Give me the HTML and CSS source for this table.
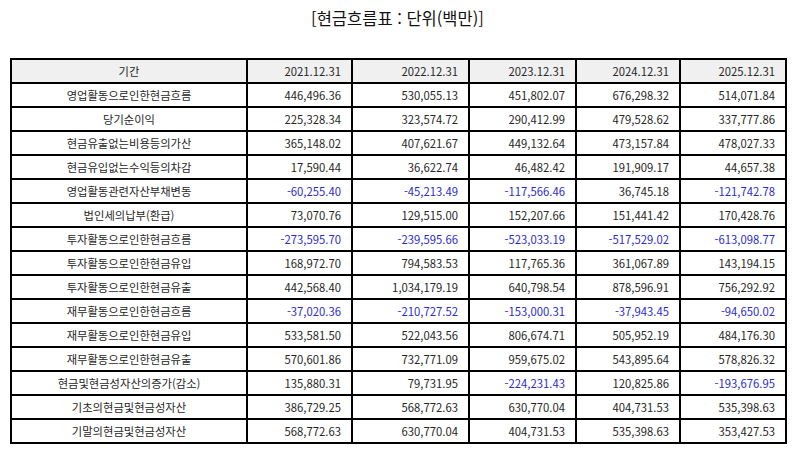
FILE: index.html
```html
<!DOCTYPE html>
<html lang="ko">
<head>
<meta charset="utf-8">
<link rel="stylesheet" href="styles.css">
</head>
<body>
<div class="page">
  <div class="title">[현금흐름표 : 단위(백만)]</div>
  <table class="cf">
    <colgroup>
      <col class="c-label"><col class="c1"><col class="c2"><col class="c3"><col class="c4"><col class="c5">
    </colgroup>
    <thead>
      <tr><th class="lbl">기간</th><th>2021.12.31</th><th>2022.12.31</th><th>2023.12.31</th><th>2024.12.31</th><th>2025.12.31</th></tr>
    </thead>
    <tbody>
      <tr><td class="lbl">영업활동으로인한현금흐름</td><td>446,496.36</td><td>530,055.13</td><td>451,802.07</td><td>676,298.32</td><td>514,071.84</td></tr>
      <tr><td class="lbl">당기순이익</td><td>225,328.34</td><td>323,574.72</td><td>290,412.99</td><td>479,528.62</td><td>337,777.86</td></tr>
      <tr><td class="lbl">현금유출없는비용등의가산</td><td>365,148.02</td><td>407,621.67</td><td>449,132.64</td><td>473,157.84</td><td>478,027.33</td></tr>
      <tr><td class="lbl">현금유입없는수익등의차감</td><td>17,590.44</td><td>36,622.74</td><td>46,482.42</td><td>191,909.17</td><td>44,657.38</td></tr>
      <tr><td class="lbl">영업활동관련자산부채변동</td><td class="neg">-60,255.40</td><td class="neg">-45,213.49</td><td class="neg">-117,566.46</td><td>36,745.18</td><td class="neg">-121,742.78</td></tr>
      <tr><td class="lbl">법인세의납부(환급)</td><td>73,070.76</td><td>129,515.00</td><td>152,207.66</td><td>151,441.42</td><td>170,428.76</td></tr>
      <tr><td class="lbl">투자활동으로인한현금흐름</td><td class="neg">-273,595.70</td><td class="neg">-239,595.66</td><td class="neg">-523,033.19</td><td class="neg">-517,529.02</td><td class="neg">-613,098.77</td></tr>
      <tr><td class="lbl">투자활동으로인한현금유입</td><td>168,972.70</td><td>794,583.53</td><td>117,765.36</td><td>361,067.89</td><td>143,194.15</td></tr>
      <tr><td class="lbl">투자활동으로인한현금유출</td><td>442,568.40</td><td>1,034,179.19</td><td>640,798.54</td><td>878,596.91</td><td>756,292.92</td></tr>
      <tr><td class="lbl">재무활동으로인한현금흐름</td><td class="neg">-37,020.36</td><td class="neg">-210,727.52</td><td class="neg">-153,000.31</td><td class="neg">-37,943.45</td><td class="neg">-94,650.02</td></tr>
      <tr><td class="lbl">재무활동으로인한현금유입</td><td>533,581.50</td><td>522,043.56</td><td>806,674.71</td><td>505,952.19</td><td>484,176.30</td></tr>
      <tr><td class="lbl">재무활동으로인한현금유출</td><td>570,601.86</td><td>732,771.09</td><td>959,675.02</td><td>543,895.64</td><td>578,826.32</td></tr>
      <tr><td class="lbl">현금및현금성자산의증가(감소)</td><td>135,880.31</td><td>79,731.95</td><td class="neg">-224,231.43</td><td>120,825.86</td><td class="neg">-193,676.95</td></tr>
      <tr><td class="lbl">기초의현금및현금성자산</td><td>386,729.25</td><td>568,772.63</td><td>630,770.04</td><td>404,731.53</td><td>535,398.63</td></tr>
      <tr><td class="lbl">기말의현금및현금성자산</td><td>568,772.63</td><td>630,770.04</td><td>404,731.53</td><td>535,398.63</td><td>353,427.53</td></tr>
    </tbody>
  </table>
</div>
</body>
</html>
```

FILE: styles.css
```css
html, body {
  margin: 0;
  padding: 0;
  background: #ffffff;
}
body {
  font-family: "Noto Sans CJK KR", "Noto Sans", sans-serif;
  color: #262626;
}
.page {
  padding: 0 10px;
}
.title {
  height: 36px;
  line-height: 36px;
  text-align: center;
  font-size: 16.5px;
  color: #111111;
}
.cf {
  margin-top: 22px;
  width: 775px;
  border-collapse: collapse;
  table-layout: fixed;
  font-size: 11.3px;
}
.c-label { width: 236px; }
.c1 { width: 105px; }
.c2 { width: 117px; }
.c3 { width: 107px; }
.c4 { width: 104px; }
.c5 { width: 106px; }
.cf th, .cf td {
  border: 2px solid #000000;
  height: 22px;
  padding: 0 10px 0 4px;
  text-align: right;
  font-weight: normal;
  line-height: 14px;
  white-space: nowrap;
}
.cf th {
  background: #f0f0f0;
}
.cf .lbl {
  text-align: center;
  padding: 0 4px;
}
.cf .neg {
  color: #2b2bcc;
}
```
